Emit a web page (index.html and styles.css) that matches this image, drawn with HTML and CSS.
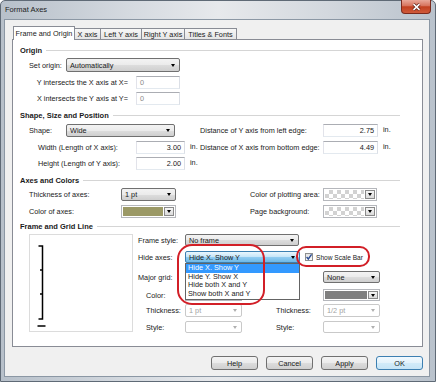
FILE: index.html
```html
<!DOCTYPE html>
<html lang="en">
<head>
    <meta charset="UTF-8">
    <meta name="viewport" content="width=device-width, initial-scale=1.0">
    <title>Format Axes</title>
    <link rel="stylesheet" href="styles.css">
</head>
<body>
<div class="window">
    <div class="titlebar">
        <span class="title">Format Axes</span>
        <div class="close">
            <svg width="9" height="8" viewBox="0 0 9 8"><path d="M1.5 1.2 L7.5 6.8 M7.5 1.2 L1.5 6.8" stroke="#5a1e14" stroke-width="3"/><path d="M1.5 1.2 L7.5 6.8 M7.5 1.2 L1.5 6.8" stroke="#fff" stroke-width="1.6"/></svg>
        </div>
    </div>

    <div class="client">
        <div class="tabs">
            <div class="tab active t1">Frame and Origin</div>
            <div class="tab t2">X axis</div>
            <div class="tab t3">Left Y axis</div>
            <div class="tab t4">Right Y axis</div>
            <div class="tab t5">Titles &amp; Fonts</div>
        </div>

        <div class="panel">
            <!-- Origin -->
            <div class="hdr hdr-long">Origin</div>
            <div class="row tall mt2">
                <span class="lbl-short">Set origin:</span>
                <div class="combo combo-origin">Automatically</div>
            </div>
            <div class="row mt4">
                <span class="lbl-wide right">Y intersects the X axis at X=</span>
                <div class="field field-sm gray">0</div>
            </div>
            <div class="row mt3">
                <span class="lbl-wide right">X intersects the Y axis at Y=</span>
                <div class="field field-sm gray">0</div>
            </div>

            <!-- Shape -->
            <div class="hdr mt5">Shape, Size and Position</div>
            <div class="row mt3">
                <span class="lbl-short">Shape:</span>
                <div class="combo combo-shape">Wide</div>
                <span class="lbl-right gap-shape">Distance of Y axis from left edge:</span>
                <div class="field field-lg">2.75</div>
                <span class="unit">in.</span>
            </div>
            <div class="row mt4">
                <span class="lbl-wide indent">Width (Length of X axis):</span>
                <div class="field field-md">3.00</div>
                <span class="unit unit-mid">in.</span>
                <span class="lbl-right">Distance of X axis from bottom edge:</span>
                <div class="field field-lg">4.49</div>
                <span class="unit">in.</span>
            </div>
            <div class="row mt3">
                <span class="lbl-wide indent">Height (Length of Y axis):</span>
                <div class="field field-md">2.00</div>
                <span class="unit unit-mid">in.</span>
            </div>

            <!-- Axes and colors -->
            <div class="hdr mt5">Axes and Colors</div>
            <div class="row mt2">
                <span class="lbl-axes">Thickness of axes:</span>
                <div class="combo combo-thick">1 pt</div>
                <span class="lbl-color">Color of plotting area:</span>
                <div class="colorbox colorbox-sm"><div class="swatch checker"></div><div class="cbtn"></div></div>
            </div>
            <div class="row mt4">
                <span class="lbl-axes">Color of axes:</span>
                <div class="colorbox colorbox-md"><div class="swatch olive"></div><div class="cbtn"></div></div>
                <span class="lbl-color">Page background:</span>
                <div class="colorbox colorbox-sm"><div class="swatch checker"></div><div class="cbtn"></div></div>
            </div>

            <!-- Frame and grid -->
            <div class="hdr mt3">Frame and Grid Line</div>
            <div class="frame">
                <div class="preview">
                    <svg width="102" height="96" viewBox="0 0 102 96">
                        <path d="M8.5 11 H12.5 V84 H8.5 M10 35 H12.5 M10 59 H12.5 M7.5 91 H15.5" fill="none" stroke="#000" stroke-width="1.5"/>
                    </svg>
                </div>
                <div class="frame-opts">
                    <div class="orow">
                        <span class="lbl-opt">Frame style:</span>
                        <div class="combo combo-frame">No frame</div>
                    </div>
                    <div class="orow mt5">
                        <span class="lbl-opt">Hide axes:</span>
                        <div class="dd">
                            <div class="combo focus">Hide X. Show Y</div>
                            <div class="dd-list">
                                <div class="opt sel">Hide X. Show Y</div>
                                <div class="opt">Hide Y. Show X</div>
                                <div class="opt">Hide both X and Y</div>
                                <div class="opt">Show both X and Y</div>
                            </div>
                        </div>
                        <span class="check">
                            <svg width="8" height="8" viewBox="0 0 8 8"><path d="M1.6 4 L3.3 6 L6.6 1.4" fill="none" stroke="#2d4d93" stroke-width="1.4"/></svg>
                        </span>
                        <span class="check-lbl">Show Scale Bar</span>
                    </div>
                    <div class="orow mt8">
                        <span class="lbl-opt">Major grid:</span>
                        <div class="combo combo-small"></div>
                        <div class="combo combo-small skip-wide">None</div>
                    </div>
                    <div class="orow mt6">
                        <span class="lbl-opt sub">Color:</span>
                        <div class="colorbox colorbox-opt"><div class="swatch grey"></div><div class="cbtn"></div></div>
                        <div class="colorbox colorbox-opt skip-wide"><div class="swatch grey"></div><div class="cbtn"></div></div>
                    </div>
                    <div class="orow tall mt3">
                        <span class="lbl-opt sub">Thickness:</span>
                        <div class="combo combo-small disabled">1 pt</div>
                        <span class="lbl-opt skip-narrow">Thickness:</span>
                        <div class="combo combo-small disabled">1/2 pt</div>
                    </div>
                    <div class="orow mt4">
                        <span class="lbl-opt sub">Style:</span>
                        <div class="combo combo-small blank"></div>
                        <span class="lbl-opt skip-narrow">Style:</span>
                        <div class="combo combo-small blank"></div>
                    </div>
                </div>
            </div>
        </div>

        <div class="buttons">
            <div class="btn">Help</div>
            <div class="btn">Cancel</div>
            <div class="btn">Apply</div>
            <div class="btn default">OK</div>
        </div>
    </div>

    <!-- red markers drawn over the dialog -->
    <div class="ring ring-list"></div>
    <div class="ring ring-check"></div>
</div>
</body>
</html>
```
FILE: styles.css
```css
* {
    box-sizing: border-box;
}

body {
    margin: 0;
    font-family: "Liberation Sans", Arial, sans-serif;
    font-size: 7.3px;
    color: #1a1a1a;
    background: #fff;
}

.window {
    position: relative;
    width: 436px;
    height: 382px;
    display: flex;
    flex-direction: column;
    border: 1px solid #5f6a76;
    border-radius: 5px 5px 0 0;
    background: linear-gradient(to right, #b7c0ca, #d5dae0 30%, #e7e9ec 50%, #d3d8de 75%, #b9c2cc);
    padding: 0 5px 4px 3px;
}

.titlebar {
    height: 18px;
    display: flex;
    align-items: flex-start;
}

.title {
    font-size: 7.5px;
    line-height: 18px;
    margin-left: 1px;
    color: #1c1c1c;
}

.close {
    margin: -1px -1px 0 auto;
    width: 30px;
    height: 14px;
    border: 1px solid #7b2a1d;
    border-top: none;
    border-radius: 0 0 4px 4px;
    background: linear-gradient(#e9a899, #d7735c 45%, #c2401f 52%, #cf5a3b);
    display: flex;
    align-items: center;
    justify-content: center;
}

.client {
    flex: 1;
    background: #f0f0f0;
    border: 1px solid #8b97a4;
    padding: 6px 6px 0 7px;
    display: flex;
    flex-direction: column;
}

/* tabs */
.tabs {
    display: flex;
    align-items: flex-end;
    height: 13px;
    margin-left: 1px;
    position: relative;
    z-index: 1;
}

.tab {
    height: 11px;
    border: 1px solid #898c95;
    border-bottom: none;
    border-left: none;
    background: linear-gradient(#f7f7f7, #e5e5e5);
    display: flex;
    align-items: center;
    justify-content: center;
    white-space: nowrap;
}

.tab.active {
    height: 14px;
    margin-bottom: -1px;
    background: #fff;
    border-left: 1px solid #898c95;
}

.t1 { width: 62px; }
.t2 { width: 26px; }
.t3 { width: 41px; }
.t4 { width: 43px; }
.t5 { width: 52px; }

.panel {
    height: 308px;
    background: #fff;
    border: 1px solid #898c95;
    padding: 5px 0 0 7px;
}

/* section headers */
.hdr {
    display: flex;
    align-items: center;
    height: 11px;
    width: 380px;
    font-weight: bold;
    font-size: 7.5px;
    white-space: nowrap;
}

.hdr::after {
    content: "";
    flex: 1;
    border-top: 1px solid #d5d5d5;
    margin-left: 4px;
}

.hdr-long {
    width: 402px;
}

.row {
    display: flex;
    align-items: center;
    height: 13px;
    margin-left: 9px;
    white-space: nowrap;
}

.row.tall {
    height: 14px;
}

.mt2 { margin-top: 2px; }
.mt3 { margin-top: 3px; }
.mt4 { margin-top: 4px; }
.mt5 { margin-top: 5px; }
.mt6 { margin-top: 6px; }
.mt8 { margin-top: 8px; }

.lbl-short { width: 37px; }
.lbl-wide { width: 107px; }
.lbl-wide.right { text-align: right; padding-right: 8px; }
.lbl-wide.indent { padding-left: 9px; }
.lbl-axes { width: 92px; }
.lbl-right { width: 123px; }
.lbl-color { width: 73px; margin-left: 74px; }
.gap-shape { margin-left: 25px; }

.unit {
    margin-left: 5px;
    margin-bottom: 2px;
}

.unit-mid {
    width: 15px;
    margin-left: 0;
    padding-left: 5px;
}

/* controls */
.combo {
    display: flex;
    align-items: center;
    height: 100%;
    padding: 0 4px 0 3px;
    border: 1px solid #707070;
    border-radius: 2px;
    background: linear-gradient(#f3f3f3, #ebebeb 50%, #dddddd 51%, #cfcfcf);
}

.combo::after {
    content: "";
    margin-left: auto;
    border-left: 2.5px solid transparent;
    border-right: 2.5px solid transparent;
    border-top: 3px solid #000;
}

.combo.focus {
    width: 100%;
    border-color: #3c7fb1;
    background: linear-gradient(#eaf6fd, #c3e5f9 50%, #93cdf1 51%, #6db8e8);
}

.combo.disabled,
.combo.blank {
    color: #a3a3a3;
    border-color: #c9c9c9;
    background: #fff;
}

.combo.disabled::after,
.combo.blank::after {
    border-top-color: #b0b0b0;
}

.combo-origin { width: 114px; }
.combo-shape { width: 109px; }
.combo-thick { width: 55px; }
.combo-frame { width: 114px; }
.combo-small { width: 57px; }

.field {
    display: flex;
    align-items: center;
    justify-content: flex-end;
    height: 100%;
    padding: 0 3px;
    background: #fff;
    border: 1px solid;
    border-color: #abadb3 #dbdfe6 #e3e9ef #e2e3ea;
}

.field.gray {
    justify-content: flex-start;
    color: #8a8a8a;
}

.field-sm { width: 44px; }
.field-md { width: 49px; }
.field-lg { width: 55px; }

.colorbox {
    display: flex;
    height: 100%;
    border: 1px solid #b5b7bc;
    background: #fff;
    padding: 1px;
}

.colorbox-sm { width: 54px; }
.colorbox-md { width: 55px; }
.colorbox-opt { width: 57px; }

.swatch {
    flex: 1;
}

.olive { background: #9b9966; }
.grey { background: #7f7f7f; }

.checker {
    background: conic-gradient(#d2d2d2 25%, #fff 0 50%, #d2d2d2 0 75%, #fff 0);
    background-size: 8px 8px;
}

.cbtn {
    width: 10px;
    margin-left: 1px;
    border: 1px solid #8a8a8a;
    background: linear-gradient(#f6f6f6, #dadada);
    display: flex;
    align-items: center;
    justify-content: center;
}

.cbtn::after {
    content: "";
    border-left: 2.5px solid transparent;
    border-right: 2.5px solid transparent;
    border-top: 3px solid #000;
}

/* frame section */
.frame {
    display: flex;
    margin: 2px 0 0 9px;
}

.preview {
    width: 104px;
    height: 98px;
    border: 1px solid #dcdcdc;
    background: #fff;
}

.frame-opts {
    margin-left: 5px;
    display: flex;
    flex-direction: column;
}

.orow {
    display: flex;
    align-items: center;
    height: 12px;
    white-space: nowrap;
}

.orow.tall {
    height: 13px;
}

.lbl-opt { width: 47px; }
.lbl-opt.sub { padding-left: 8px; }
.skip-wide { margin-left: 81px; }
.skip-narrow { margin-left: 34px; }

.dd {
    position: relative;
    width: 115px;
    height: 100%;
}

.dd-list {
    position: absolute;
    top: 12px;
    left: 0;
    width: 115px;
    border: 1px solid #646464;
    background: #fff;
    z-index: 2;
}

.opt {
    height: 8.7px;
    line-height: 8.7px;
    padding-left: 2px;
}

.opt.sel {
    background: #3399ff;
    color: #fff;
}

.check {
    width: 8px;
    height: 8px;
    margin-left: 5px;
    border: 1px solid #8e8f8f;
    background: linear-gradient(#e3e3e3, #fbfbfb);
    display: flex;
}

.check svg {
    margin: -1px;
}

.check-lbl {
    margin-left: 3px;
    font-size: 6.6px;
}

/* bottom buttons */
.buttons {
    display: flex;
    justify-content: flex-end;
    gap: 8px;
    margin-top: 9px;
}

.btn {
    width: 47px;
    height: 14px;
    border: 1px solid #707070;
    border-radius: 3px;
    background: linear-gradient(#f3f3f3, #ebebeb 50%, #dddddd 51%, #cfcfcf);
    display: flex;
    align-items: center;
    justify-content: center;
}

.btn.default {
    border-color: #3c7fb1;
    background: linear-gradient(#f1f9fe, #e3f2fb 50%, #d2ebf9 51%, #c6e4f6);
}

/* annotation rings */
.ring {
    position: absolute;
    border: 2px solid #d21f27;
    z-index: 3;
}

.ring-list {
    left: 176px;
    top: 243px;
    width: 88px;
    height: 61px;
    border-radius: 15px;
}

.ring-check {
    left: 295px;
    top: 245px;
    width: 74px;
    height: 21px;
    border-radius: 10px;
}
```
